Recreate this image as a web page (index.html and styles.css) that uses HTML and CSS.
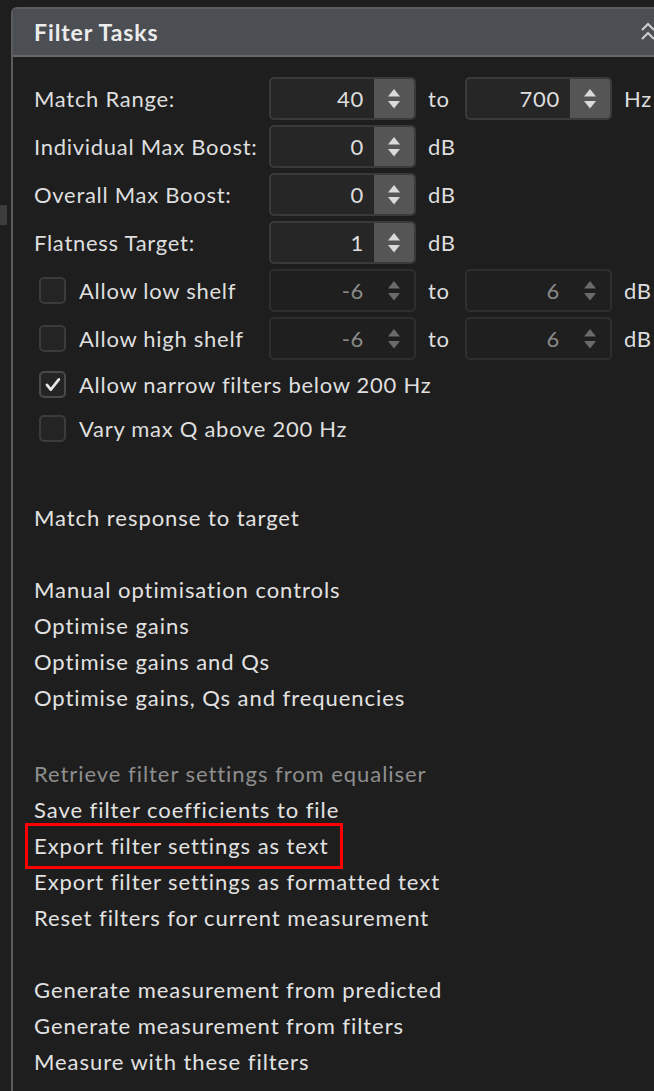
FILE: index.html
```html
<!DOCTYPE html>
<html lang="en">
<head>
<meta charset="utf-8">
<title>Filter Tasks</title>
<link rel="stylesheet" href="styles.css">
</head>
<body>
<div class="gutter"><div class="tab"></div></div>
<section class="panel">
  <header class="panel-head">
    <span class="title">Filter Tasks</span>
    <svg class="collapse" viewBox="0 0 14 20" aria-hidden="true">
      <polyline points="1,8 7,2 13,8" />
      <polyline points="1,17 7,11 13,17" />
    </svg>
  </header>
  <div class="panel-body">
    <div class="form">
      <div class="row">
        <span class="label">Match Range:</span>
        <div class="spin"><span class="val">40</span><span class="btn"><svg viewBox="0 0 12 20"><polygon points="6,0 12,7.5 0,7.5"/><polygon points="0,12 12,12 6,19.5"/></svg></span></div>
        <span class="unit">to</span>
        <div class="spin"><span class="val">700</span><span class="btn"><svg viewBox="0 0 12 20"><polygon points="6,0 12,7.5 0,7.5"/><polygon points="0,12 12,12 6,19.5"/></svg></span></div>
        <span class="unit">Hz</span>
      </div>
      <div class="row">
        <span class="label">Individual Max Boost:</span>
        <div class="spin"><span class="val">0</span><span class="btn"><svg viewBox="0 0 12 20"><polygon points="6,0 12,7.5 0,7.5"/><polygon points="0,12 12,12 6,19.5"/></svg></span></div>
        <span class="unit">dB</span>
      </div>
      <div class="row">
        <span class="label">Overall Max Boost:</span>
        <div class="spin"><span class="val">0</span><span class="btn"><svg viewBox="0 0 12 20"><polygon points="6,0 12,7.5 0,7.5"/><polygon points="0,12 12,12 6,19.5"/></svg></span></div>
        <span class="unit">dB</span>
      </div>
      <div class="row">
        <span class="label">Flatness Target:</span>
        <div class="spin"><span class="val">1</span><span class="btn"><svg viewBox="0 0 12 20"><polygon points="6,0 12,7.5 0,7.5"/><polygon points="0,12 12,12 6,19.5"/></svg></span></div>
        <span class="unit">dB</span>
      </div>
      <div class="row">
        <label class="check"><span class="box"></span><span>Allow low shelf</span></label>
        <div class="spin disabled"><span class="val">-6</span><span class="btn"><svg viewBox="0 0 12 20"><polygon points="6,0 12,7.5 0,7.5"/><polygon points="0,12 12,12 6,19.5"/></svg></span></div>
        <span class="unit">to</span>
        <div class="spin disabled"><span class="val">6</span><span class="btn"><svg viewBox="0 0 12 20"><polygon points="6,0 12,7.5 0,7.5"/><polygon points="0,12 12,12 6,19.5"/></svg></span></div>
        <span class="unit">dB</span>
      </div>
      <div class="row">
        <label class="check"><span class="box"></span><span>Allow high shelf</span></label>
        <div class="spin disabled"><span class="val">-6</span><span class="btn"><svg viewBox="0 0 12 20"><polygon points="6,0 12,7.5 0,7.5"/><polygon points="0,12 12,12 6,19.5"/></svg></span></div>
        <span class="unit">to</span>
        <div class="spin disabled"><span class="val">6</span><span class="btn"><svg viewBox="0 0 12 20"><polygon points="6,0 12,7.5 0,7.5"/><polygon points="0,12 12,12 6,19.5"/></svg></span></div>
        <span class="unit">dB</span>
      </div>
      <div class="row check-row">
        <label class="check"><span class="box checked"><svg viewBox="0 0 27 27"><path d="M7 14 L11.5 19.5 L21 7.5"/></svg></span><span>Allow narrow filters below 200 Hz</span></label>
      </div>
      <div class="row check-row">
        <label class="check"><span class="box"></span><span>Vary max Q above 200 Hz</span></label>
      </div>
    </div>

    <div class="links">
      <div class="group">
        <div class="link">Match response to target</div>
      </div>
      <div class="group">
        <div class="link">Manual optimisation controls</div>
        <div class="link">Optimise gains</div>
        <div class="link">Optimise gains and Qs</div>
        <div class="link">Optimise gains, Qs and frequencies</div>
      </div>
      <div class="group group-wide">
        <div class="link muted">Retrieve filter settings from equaliser</div>
        <div class="link">Save filter coefficients to file</div>
        <div class="link highlight">Export filter settings as text</div>
        <div class="link">Export filter settings as formatted text</div>
        <div class="link">Reset filters for current measurement</div>
      </div>
      <div class="group">
        <div class="link">Generate measurement from predicted</div>
        <div class="link">Generate measurement from filters</div>
        <div class="link">Measure with these filters</div>
      </div>
    </div>
  </div>
</section>
</body>
</html>
```

FILE: styles.css
```css
html, body {
  margin: 0;
  height: 1091px;
}

body {
  background: #1e1e1e;
  color: #dedede;
  font-family: Lato, "Open Sans", "DejaVu Sans", sans-serif;
  font-size: 22px;
  letter-spacing: 0.72px;
  display: flex;
  align-items: flex-start;
  overflow: hidden;
}

.gutter {
  flex: none;
  width: 11px;
  padding-top: 205px;
}

.tab {
  width: 7px;
  height: 20px;
  background: #3d3d3d;
}

.panel {
  flex: none;
  width: 661px;
  min-height: 1084px;
  margin-top: 7px;
  box-sizing: border-box;
  border-left: 2px solid #5c5c5c;
  border-top: 2px solid #5c5c5c;
  border-top-left-radius: 6px;
}

.panel-head {
  height: 46px;
  background: #4b4e52;
  border-bottom: 2px solid #686868;
  border-top-left-radius: 4px;
  display: flex;
  align-items: center;
  padding: 0 17px 0 21px;
}

.title {
  font-weight: 700;
  font-size: 23px;
  letter-spacing: 0.9px;
  color: #ececec;
}

.collapse {
  margin-left: auto;
  width: 14px;
  height: 20px;
  fill: none;
  stroke: #cfcfcf;
  stroke-width: 2;
}

.panel-body {
  padding: 20px 0 0 21px;
}

.form {
  display: flex;
  flex-direction: column;
  gap: 5px;
}

.row {
  display: grid;
  grid-template-columns: 235px 147px 49px 147px auto;
  align-items: center;
  height: 43px;
}

.row.check-row {
  display: flex;
  height: 39px;
}

.spin {
  height: 43px;
  box-sizing: border-box;
  border: 2px solid #3a3a3a;
  border-radius: 5px;
  background: #262626;
  display: flex;
  overflow: hidden;
}

.spin .val {
  flex: 1;
  align-self: center;
  text-align: right;
  padding-right: 10px;
}

.spin .btn {
  width: 40px;
  background: #555555;
  display: flex;
  align-items: center;
  justify-content: center;
}

.spin .btn svg {
  width: 12px;
  height: 20px;
  fill: #dadada;
}

.spin.disabled {
  background: #1f1f1f;
  border-color: #2e2e2e;
  color: #8a8a8a;
}

.spin.disabled .btn {
  background: transparent;
}

.spin.disabled .btn svg {
  fill: #6b6b6b;
}

.unit {
  padding-left: 12px;
}

.check {
  display: flex;
  align-items: center;
  gap: 13px;
  padding-left: 5px;
  white-space: nowrap;
}

.box {
  flex: none;
  width: 27px;
  height: 27px;
  box-sizing: border-box;
  border: 2px solid #3b3b3b;
  border-radius: 5px;
  background: #242424;
  display: flex;
}

.box.checked {
  border-color: #4a4a4a;
}

.box svg {
  width: 23px;
  height: 23px;
  fill: none;
  stroke: #e6e6e6;
  stroke-width: 3.2;
  stroke-linecap: round;
  stroke-linejoin: round;
}

.links {
  margin-top: 52px;
}

.group + .group {
  margin-top: 36px;
}

.group.group-wide {
  margin-top: 40px;
}

.link {
  line-height: 36px;
  height: 36px;
  color: #e2e2e2;
  letter-spacing: 0.95px;
  white-space: nowrap;
}

.link.muted {
  color: #8e8e8e;
}

.link.highlight {
  position: relative;
}

.link.highlight::after {
  content: "";
  position: absolute;
  left: -9px;
  top: -5px;
  width: 318px;
  height: 46px;
  box-sizing: border-box;
  border: 3px solid #ff0000;
}
```
